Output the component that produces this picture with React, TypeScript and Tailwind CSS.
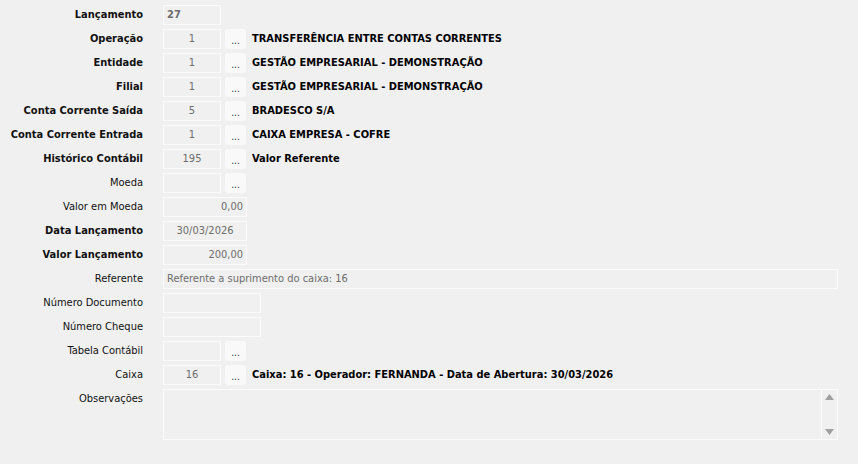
const font = { fontFamily: '"DejaVu Sans Condensed", "DejaVu Sans", sans-serif' };

type Row = {
  label: string;
  bold?: boolean;
  value?: string;
  width?: string;
  align?: 'left' | 'center' | 'right';
  button?: boolean;
  desc?: string;
  valueBold?: boolean;
};

const rows: Row[] = [
  { label: 'Lançamento', bold: true, value: '27', width: 'w-[58px]', align: 'left', valueBold: true },
  { label: 'Operação', bold: true, value: '1', width: 'w-[58px]', button: true, desc: 'TRANSFERÊNCIA ENTRE CONTAS CORRENTES' },
  { label: 'Entidade', bold: true, value: '1', width: 'w-[58px]', button: true, desc: 'GESTÃO EMPRESARIAL - DEMONSTRAÇÃO' },
  { label: 'Filial', bold: true, value: '1', width: 'w-[58px]', button: true, desc: 'GESTÃO EMPRESARIAL - DEMONSTRAÇÃO' },
  { label: 'Conta Corrente Saída', bold: true, value: '5', width: 'w-[58px]', button: true, desc: 'BRADESCO S/A' },
  { label: 'Conta Corrente Entrada', bold: true, value: '1', width: 'w-[58px]', button: true, desc: 'CAIXA EMPRESA - COFRE' },
  { label: 'Histórico Contábil', bold: true, value: '195', width: 'w-[58px]', button: true, desc: 'Valor Referente' },
  { label: 'Moeda', value: '', width: 'w-[58px]', button: true },
  { label: 'Valor em Moeda', value: '0,00', width: 'w-[84px]', align: 'right' },
  { label: 'Data Lançamento', bold: true, value: '30/03/2026', width: 'w-[84px]' },
  { label: 'Valor Lançamento', bold: true, value: '200,00', width: 'w-[84px]', align: 'right' },
  { label: 'Referente', value: 'Referente a suprimento do caixa: 16', width: 'w-[675px]', align: 'left' },
  { label: 'Número Documento', value: '', width: 'w-[98px]' },
  { label: 'Número Cheque', value: '', width: 'w-[98px]' },
  { label: 'Tabela Contábil', value: '', width: 'w-[58px]', button: true },
  { label: 'Caixa', value: '16', width: 'w-[58px]', button: true, desc: 'Caixa: 16 - Operador: FERNANDA - Data de Abertura: 30/03/2026' },
];

function Field({ r }: { r: Row }) {
  const align =
    r.align === 'left' ? 'justify-start pl-[3px]' : r.align === 'right' ? 'justify-end pr-[3px]' : 'justify-center';
  return (
    <div className="flex h-[24px] items-center">
      <div
        className={`w-[143px] shrink-0 whitespace-nowrap pt-[1px] text-right text-[11px] text-[#111] ${r.bold ? 'font-bold' : ''}`}
      >
        {r.label}
      </div>
      <div className="w-[20px] shrink-0" />
      <div
        className={`flex h-[20px] items-center border border-[#fbfbfb] bg-[#f0f0f0] pt-[1px] text-[11px] text-[#6d6d6d] ${r.width} ${align} ${r.valueBold ? 'font-bold' : ''}`}
      >
        {r.value}
      </div>
      {r.button && (
        <div className="ml-[4px] flex h-[20px] w-[21px] items-end justify-center rounded-[3px] bg-[#f9f9f9] pb-[3px] text-[10px] leading-none text-[#333]">
          ...
        </div>
      )}
      {r.desc && (
        <div className="ml-[6px] whitespace-nowrap pt-[1px] text-[11px] font-bold text-[#000]">{r.desc}</div>
      )}
    </div>
  );
}

export default function App() {
  return (
    <div className="h-[464px] w-[858px] overflow-hidden bg-[#f0f0f0] pt-[3px]" style={font}>
      {rows.map((r) => (
        <Field key={r.label} r={r} />
      ))}
      <div className="flex pt-[2px]">
        <div className="w-[143px] shrink-0 pt-[2px] text-right text-[11px] text-[#111]">Observações</div>
        <div className="w-[20px] shrink-0" />
        <div className="flex h-[51px] w-[675px] border border-[#fbfbfb] bg-[#f0f0f0]">
          <div className="flex-1" />
          <div className="flex w-[16px] flex-col items-center justify-between border-l border-[#fbfbfb] py-[4px]">
            <svg width="9" height="6" viewBox="0 0 9 6">
              <path d="M0 6 L4.5 0 L9 6 Z" fill="#a0a0a0" />
            </svg>
            <svg width="9" height="6" viewBox="0 0 9 6">
              <path d="M0 0 L4.5 6 L9 0 Z" fill="#a0a0a0" />
            </svg>
          </div>
        </div>
      </div>
    </div>
  );
}
